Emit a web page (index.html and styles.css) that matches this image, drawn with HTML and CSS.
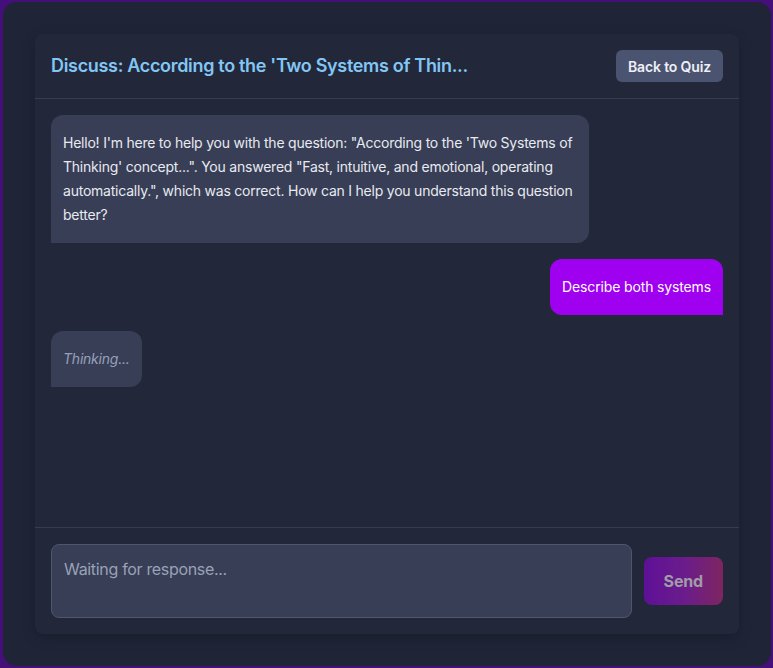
FILE: index.html
```html
<!DOCTYPE html>
<html lang="en">
<head>
<meta charset="utf-8">
<title>Discuss</title>
<link rel="stylesheet" href="styles.css">
</head>
<body>
<div class="app">
  <div class="panel">
    <header class="header">
      <h1 class="title">Discuss: According to the 'Two Systems of Thin...</h1>
      <button class="back-btn">Back to Quiz</button>
    </header>
    <div class="messages">
      <div class="msg msg-ai">Hello! I'm here to help you with the question: "According to the 'Two Systems of Thinking' concept...". You answered "Fast, intuitive, and emotional, operating automatically.", which was correct. How can I help you understand this question better?</div>
      <div class="msg msg-user">Describe both systems</div>
      <div class="msg msg-ai msg-thinking">Thinking...</div>
    </div>
    <div class="composer">
      <textarea class="input" placeholder="Waiting for response..." disabled></textarea>
      <button class="send-btn" disabled>Send</button>
    </div>
  </div>
</div>
</body>
</html>
```
FILE: styles.css
```css
* { box-sizing: border-box; }
html, body { margin: 0; padding: 0; }
body {
  background: #450f7a;
  font-family: Inter, "Noto Sans", "Liberation Sans", sans-serif;
  letter-spacing: -0.02em;
  height: 668px;
  overflow: hidden;
}
.app {
  margin: 2px 2px 2px 3px;
  height: 664px;
  border-radius: 14px;
  background: #1f2437;
  padding: 32px;
}
.panel {
  height: 600px;
  background: #222839;
  border-radius: 8px;
  box-shadow: 0 4px 14px rgba(0, 0, 0, 0.18);
  display: flex;
  flex-direction: column;
}
.header {
  display: flex;
  justify-content: space-between;
  align-items: center;
  padding: 16px;
  border-bottom: 1px solid #363d52;
}
.title {
  margin: 0;
  font-size: 18px;
  font-weight: 600;
  color: #82c6f6;
  line-height: 24px;
}
.back-btn {
  font-family: inherit;
  letter-spacing: -0.01em;
  background: #4a5370;
  color: #eef0f5;
  border: none;
  border-radius: 6px;
  height: 32px;
  padding: 0 12px;
  font-size: 14px;
  font-weight: 600;
}
.messages {
  flex: 1;
  padding: 16px;
  display: flex;
  flex-direction: column;
  gap: 16px;
}
.msg {
  max-width: 80%;
  padding: 16px 12px;
  font-size: 14px;
  line-height: 24px;
  letter-spacing: -0.01em;
  border-radius: 12px;
}
.msg-ai {
  align-self: flex-start;
  background: #373e56;
  color: #e8eaf0;
  letter-spacing: -0.016em;
  border-bottom-left-radius: 0;
}
.msg-user {
  align-self: flex-end;
  background: #a000f0;
  color: #ffffff;
  border-bottom-right-radius: 0;
}
.msg-thinking {
  font-style: italic;
  color: #97a0b6;
}
.composer {
  display: flex;
  align-items: center;
  gap: 12px;
  padding: 16px;
  border-top: 1px solid #363d52;
}
.input {
  flex: 1;
  height: 74px;
  resize: none;
  background: #373e56;
  border: 1px solid #4e566c;
  border-radius: 8px;
  padding: 12px;
  font-family: inherit;
  letter-spacing: -0.02em;
  font-size: 16px;
  line-height: 24px;
  color: #e8eaf0;
}
.input::placeholder { color: #9aa2b6; }
.send-btn {
  font-family: inherit;
  letter-spacing: -0.01em;
  height: 48px;
  padding: 0 20px;
  border: none;
  border-radius: 8px;
  font-size: 16px;
  font-weight: 700;
  color: #a09ca8;
  background: linear-gradient(to right, #5e1097, #6a1c8c 50%, #7e2560);
}
```
